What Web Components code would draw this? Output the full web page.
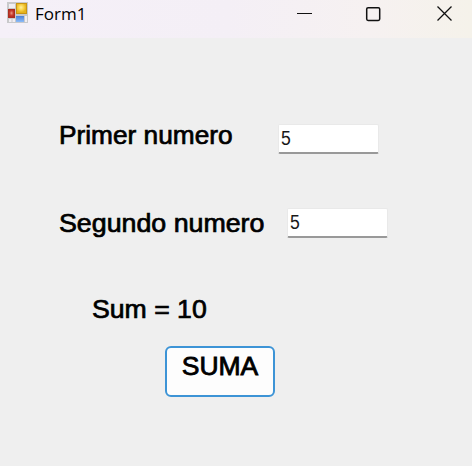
<!DOCTYPE html>
<html lang="es">
<head>
<meta charset="utf-8">
<title>Form1</title>
<style>
html,body{margin:0;height:100%;overflow:hidden}
body{font-family:"Liberation Sans",Arial,sans-serif;color:#000}
</style>
</head>
<body>
<form-window caption="Form1">
  <form-row style="--top:86px;--height:30px;--gap:44px">
    <form-label style="--width:175px;--stretch:1.05">Primer numero</form-label>
    <text-field value="5"></text-field>
  </form-row>
  <form-row style="--top:54px;--height:30px;--gap:20px">
    <form-label style="--width:208px;--stretch:1.071;--shift:4px">Segundo numero</form-label>
    <text-field value="5"></text-field>
  </form-row>
  <form-row style="--top:56px;--height:30px;--left:92px">
    <form-label style="--width:120px;--stretch:1.065;--shift:4px">Sum = 10</form-label>
  </form-row>
  <form-row style="--top:22px;--height:52px;--left:165px">
    <push-button>SUMA</push-button>
  </form-row>
</form-window>
<script>
const define = (name, html, setup) => {
  const template = document.createElement('template');
  template.innerHTML = html;
  customElements.define(name, class extends HTMLElement {
    constructor() {
      super();
      this.attachShadow({mode: 'open'}).append(template.content.cloneNode(true));
    }
    connectedCallback() { if (setup) setup(this, this.shadowRoot); }
  });
};

define('app-icon', `
<style>:host{display:block;width:21px;height:21px}svg{display:block}</style>
<svg width="21" height="21" viewBox="0 0 21 21">
  <defs>
    <radialGradient id="y" cx=".45" cy=".4"><stop offset="0" stop-color="#fff0a0"/><stop offset=".5" stop-color="#fad54f"/><stop offset="1" stop-color="#e5b21c"/></radialGradient>
    <radialGradient id="r" cx=".5" cy=".45"><stop offset="0" stop-color="#e99a88"/><stop offset=".6" stop-color="#c93e30"/><stop offset="1" stop-color="#b22c22"/></radialGradient>
    <linearGradient id="b" x2="0" y2="1"><stop offset="0" stop-color="#4a80d8"/><stop offset="1" stop-color="#8dbcf8"/></linearGradient>
  </defs>
  <rect width="21" height="21" fill="#c9c9cb"/>
  <g fill="#f1eef3"><rect x="2" y="2" width="6" height="4"/><rect x="2" y="17" width="2.5" height="3"/><rect x="5.5" y="17" width="2.5" height="3"/><rect x="18" y="14" width="2" height="6"/></g>
  <rect x="9.5" y="1.5" width="10" height="10" fill="url(#y)" stroke="#c89414"/>
  <rect x="1.5" y="7.5" width="6" height="8" fill="url(#r)" stroke="#a92d22"/>
  <rect x="9" y="14" width="8" height="6" fill="url(#b)"/>
</svg>`);

define('window-controls', `
<style>:host{display:block;width:156px;height:16px}svg{display:block}</style>
<svg width="156" height="16" viewBox="0 0 156 16" fill="none" stroke="#111">
  <path d="M0 7.5h15"/>
  <rect x="69.7" y="1.7" width="13" height="12.8" rx="1.4" stroke-width="1.5"/>
  <path d="M140.500.5l14 14M154.500.5l-14 14" stroke-width="1.3"/>
</svg>`);

define('title-bar', `
<style>
:host{display:flex;height:38px;box-sizing:border-box;padding:2px 19px 0 7px;background:linear-gradient(90deg,#f5f0f8 0%,#f4eff6 48%,#f6f1f1 78%,#f5f2ea 100%)}
.name{font:17px/24px "Open Sans","Noto Sans",sans-serif;margin-left:7px;flex:1}
window-controls{margin-top:4px;margin-right:0}
</style>
<app-icon></app-icon><span class="name"><slot></slot></span><window-controls></window-controls>`);

define('form-window', `
<style>:host{display:flex;flex-direction:column;height:100%;background:#efefef}</style>
<title-bar></title-bar><slot></slot>`,
(el, root) => { root.querySelector('title-bar').textContent = el.getAttribute('caption'); });

define('form-row', `
<style>:host{display:flex;flex:none;margin-top:var(--top);height:var(--height);padding-left:var(--left,59px);gap:var(--gap,0)}</style>
<slot></slot>`);

define('form-label', `
<style>:host{display:block;width:var(--width);flex:none;white-space:nowrap;font-size:25px;line-height:28px;padding-top:var(--shift,0);margin-top:-3px;-webkit-text-stroke:.7px #000}
span{display:block;transform:scaleX(var(--stretch,1));transform-origin:left}</style>
<span><slot></slot></span>`);

define('text-field', `
<style>:host{display:block;flex:none;width:101px;height:30px;box-sizing:border-box;background:#fff;border:1px solid #e9e9e9;border-bottom:2px solid #999;border-radius:2px;padding-left:2px}
span{display:block;font-size:20px;line-height:27px;color:#181818;transform:scaleX(.88);transform-origin:left}</style>
<span></span>`,
(el, root) => { root.querySelector('span').textContent = el.getAttribute('value'); });

define('push-button', `
<style>:host{display:block;box-sizing:border-box;width:110px;height:51px;background:#fdfdfd;border:2px solid #3d94d6;border-radius:6px;text-align:center;font-size:25px;line-height:28px;padding-top:4px;-webkit-text-stroke:.8px #000}
span{display:block;transform:scaleX(1.06)}</style>
<span><slot></slot></span>`);
</script>
</body>
</html>
